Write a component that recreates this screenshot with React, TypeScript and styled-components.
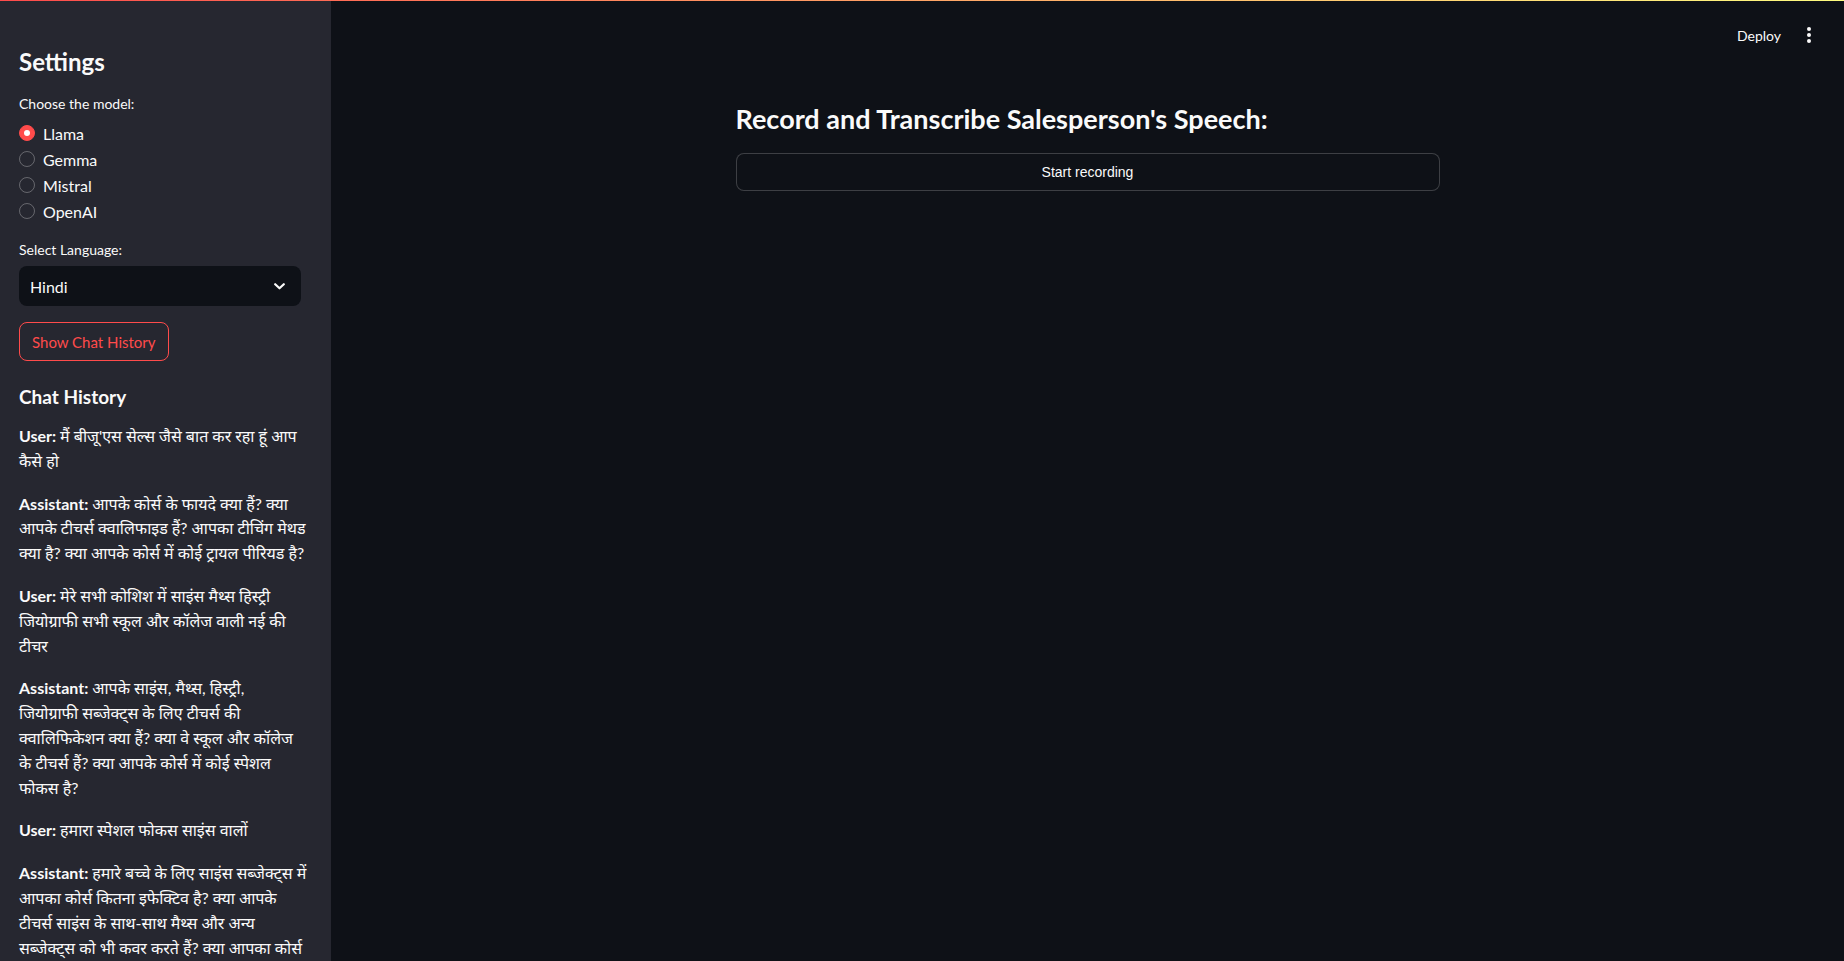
import React from "react";
import styled, { createGlobalStyle } from "styled-components";

const GlobalStyle = createGlobalStyle`
  html, body { margin: 0; padding: 0; background: #0e1117; }
  body { font-family: Lato, "Noto Sans", "Noto Sans Devanagari", sans-serif; color: #fafafa; overflow: hidden; }
  * { box-sizing: border-box; }
`;

const Page = styled.div`
  position: relative;
  display: flex;
  width: 100vw;
  height: 100vh;
  overflow: hidden;
`;

const Decoration = styled.div`
  position: absolute;
  top: 0;
  left: 0;
  right: 0;
  height: 1px;
  background: linear-gradient(90deg, #ff4b4b, #fffd80);
  z-index: 5;
`;

const Sidebar = styled.aside`
  width: 331px;
  flex: none;
  background: #262730;
  padding: 47px 30px 0 19px;
  display: flex;
  flex-direction: column;
  overflow: hidden;
  & > * { flex-shrink: 0; }
`;

const SideTitle = styled.h2`
  margin: 0;
  font-size: 24px;
  line-height: 29px;
  font-weight: 700;
`;

const Label = styled.div<{ $top: number }>`
  margin-top: ${(p) => p.$top}px;
  font-size: 14px;
  line-height: 20px;
`;

const RadioGroup = styled.div`
  margin-top: 7px;
  display: flex;
  flex-direction: column;
  gap: 2px;
`;

const RadioRow = styled.label`
  display: flex;
  align-items: center;
  gap: 8px;
  height: 24px;
  font-size: 16px;
`;

const RadioCircle = styled.span<{ $on: boolean }>`
  width: 16px;
  height: 16px;
  border-radius: 50%;
  flex: none;
  display: flex;
  align-items: center;
  justify-content: center;
  background: ${(p) => (p.$on ? "#ff4b4b" : "transparent")};
  border: 1px solid ${(p) => (p.$on ? "#ff4b4b" : "rgba(250,250,250,0.3)")};
  &::after {
    content: "";
    display: ${(p) => (p.$on ? "block" : "none")};
    width: 6px;
    height: 6px;
    border-radius: 50%;
    background: #fff;
  }
`;

const Select = styled.div`
  margin-top: 6px;
  height: 40px;
  border-radius: 8px;
  background: #0e1117;
  display: flex;
  align-items: center;
  justify-content: space-between;
  padding: 0 16px 0 11px;
  font-size: 16px;
`;

const OutlineButton = styled.button`
  margin-top: 16px;
  align-self: flex-start;
  height: 39px;
  padding: 0 12px;
  border-radius: 8px;
  border: 1px solid #ff4b4b;
  background: transparent;
  color: #ff4b4b;
  font-family: inherit;
  font-size: 15px;
`;

const HistoryTitle = styled.h3`
  margin: 24px 0 15px;
  font-size: 19px;
  line-height: 24px;
  font-weight: 700;
`;

const Message = styled.p`
  margin: 0 0 18px;
  font-size: 16px;
  line-height: 24.8px;
  b { font-weight: 700; }
`;

const Line = styled.span`
  display: block;
  white-space: nowrap;
`;

const Main = styled.main`
  flex: 1;
  display: flex;
  flex-direction: column;
  background: #0e1117;
`;

const Header = styled.header`
  height: 70px;
  display: flex;
  align-items: center;
  justify-content: flex-end;
  padding-right: 33px;
  gap: 26px;
  font-size: 14px;
`;

const Kebab = styled.div`
  display: flex;
  flex-direction: column;
  gap: 2px;
  span {
    width: 4px;
    height: 4px;
    border-radius: 50%;
    background: #fafafa;
  }
`;

const Content = styled.section`
  width: 704px;
  align-self: center;
  margin-top: 32px;
  display: flex;
  flex-direction: column;
`;

const MainTitle = styled.h3`
  margin: 0;
  font-size: 27px;
  line-height: 34px;
  font-weight: 700;
`;

const RecordButton = styled.button`
  margin-top: 17px;
  height: 38px;
  border-radius: 8px;
  border: 1px solid rgba(250, 250, 250, 0.2);
  background: #0e1117;
  color: #fafafa;
  font-family: "Liberation Sans", Arial, sans-serif;
  font-size: 14px;
`;

const models = ["Llama", "Gemma", "Mistral", "OpenAI"];

const history: { who: string; lines: string[] }[] = [
  { who: "User:", lines: ["मैं बीजू'एस सेल्स जैसे बात कर रहा हूं आप", "कैसे हो"] },
  {
    who: "Assistant:",
    lines: [
      "आपके कोर्स के फायदे क्या हैं? क्या",
      "आपके टीचर्स क्वालिफाइड हैं? आपका टीचिंग मेथड",
      "क्या है? क्या आपके कोर्स में कोई ट्रायल पीरियड है?",
    ],
  },
  {
    who: "User:",
    lines: ["मेरे सभी कोशिश में साइंस मैथ्स हिस्ट्री", "जियोग्राफी सभी स्कूल और कॉलेज वाली नई की", "टीचर"],
  },
  {
    who: "Assistant:",
    lines: [
      "आपके साइंस, मैथ्स, हिस्ट्री,",
      "जियोग्राफी सब्जेक्ट्स के लिए टीचर्स की",
      "क्वालिफिकेशन क्या हैं? क्या वे स्कूल और कॉलेज",
      "के टीचर्स हैं? क्या आपके कोर्स में कोई स्पेशल",
      "फोकस है?",
    ],
  },
  { who: "User:", lines: ["हमारा स्पेशल फोकस साइंस वालों"] },
  {
    who: "Assistant:",
    lines: [
      "हमारे बच्चे के लिए साइंस सब्जेक्ट्स में",
      "आपका कोर्स कितना इफेक्टिव है? क्या आपके",
      "टीचर्स साइंस के साथ-साथ मैथ्स और अन्य",
      "सब्जेक्ट्स को भी कवर करते हैं? क्या आपका कोर्स",
    ],
  },
];

export default function App() {
  return (
    <>
      <GlobalStyle />
      <Page>
        <Decoration />
        <Sidebar>
          <SideTitle>Settings</SideTitle>
          <Label $top={18}>Choose the model:</Label>
          <RadioGroup>
            {models.map((m, i) => (
              <RadioRow key={m}>
                <RadioCircle $on={i === 0} />
                {m}
              </RadioRow>
            ))}
          </RadioGroup>
          <Label $top={17}>Select Language:</Label>
          <Select>
            <span>Hindi</span>
            <svg width="11" height="7" viewBox="0 0 11 7" fill="none">
              <path d="M1.2 1.2 5.5 5.3 9.8 1.2" stroke="#fafafa" strokeWidth="2.2" strokeLinecap="round" strokeLinejoin="round" />
            </svg>
          </Select>
          <OutlineButton>Show Chat History</OutlineButton>
          <HistoryTitle>Chat History</HistoryTitle>
          {history.map((m, i) => (
            <Message key={i}>
              {m.lines.map((l, j) => (
                <Line key={j}>
                  {j === 0 && <b>{m.who} </b>}
                  {l}
                </Line>
              ))}
            </Message>
          ))}
        </Sidebar>
        <Main>
          <Header>
            <span>Deploy</span>
            <Kebab>
              <span />
              <span />
              <span />
            </Kebab>
          </Header>
          <Content>
            <MainTitle>Record and Transcribe Salesperson's Speech:</MainTitle>
            <RecordButton>Start recording</RecordButton>
          </Content>
        </Main>
      </Page>
    </>
  );
}
